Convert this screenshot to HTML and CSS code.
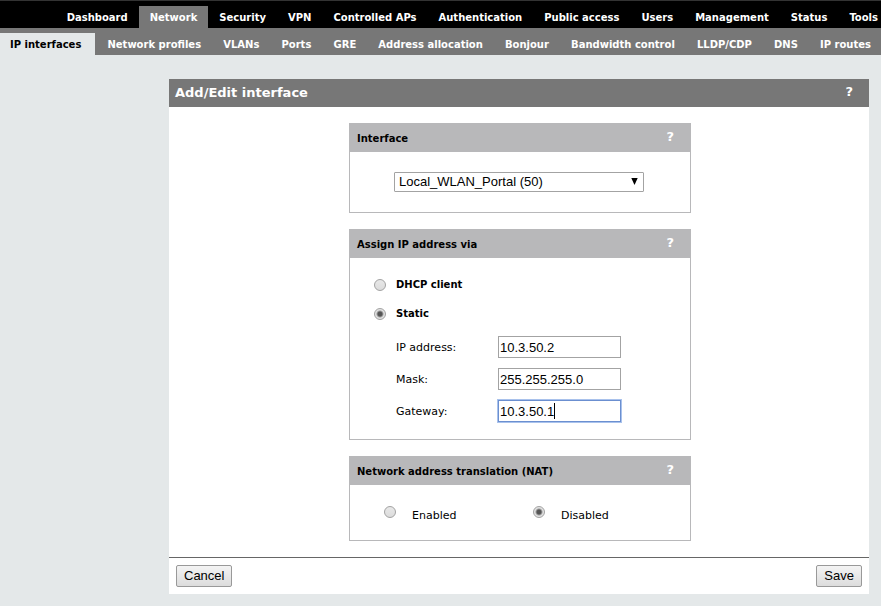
FILE: index.html
```html
<!DOCTYPE html>
<html lang="en">
<head>
<meta charset="utf-8">
<title>Add/Edit interface</title>
<link rel="stylesheet" href="styles.css">
</head>
<body>
<header>
  <nav class="nav nav-main" aria-label="Main">
    <a href="#">Dashboard</a>
    <a href="#" class="active">Network</a>
    <a href="#">Security</a>
    <a href="#">VPN</a>
    <a href="#">Controlled APs</a>
    <a href="#">Authentication</a>
    <a href="#">Public access</a>
    <a href="#">Users</a>
    <a href="#">Management</a>
    <a href="#">Status</a>
    <a href="#">Tools</a>
  </nav>
  <nav class="nav nav-sub" aria-label="Network">
    <a href="#" class="active">IP interfaces</a>
    <a href="#">Network profiles</a>
    <a href="#">VLANs</a>
    <a href="#">Ports</a>
    <a href="#">GRE</a>
    <a href="#">Address allocation</a>
    <a href="#">Bonjour</a>
    <a href="#">Bandwidth control</a>
    <a href="#">LLDP/CDP</a>
    <a href="#">DNS</a>
    <a href="#">IP routes</a>
  </nav>
</header>
<main class="page">
  <form class="panel">
    <div class="panel-head">
      <h1>Add/Edit interface</h1>
      <a href="#" class="help">?</a>
    </div>
    <div class="panel-body">
      <section class="card">
        <div class="card-head">
          <h2 id="iface-title">Interface</h2>
          <a href="#" class="help">?</a>
        </div>
        <div class="card-body iface-body">
          <div class="select-wrap">
            <select aria-labelledby="iface-title">
              <option>Local_WLAN_Portal (50)</option>
            </select>
            <svg class="arrow" viewBox="0 0 7 7" aria-hidden="true"><path d="M0.3 0h6.4L3.5 7z"/></svg>
          </div>
        </div>
      </section>
      <section class="card">
        <div class="card-head">
          <h2>Assign IP address via</h2>
          <a href="#" class="help">?</a>
        </div>
        <div class="card-body assign-body">
          <label class="choice"><input type="radio" name="assign"><span>DHCP client</span></label>
          <label class="choice"><input type="radio" name="assign" checked><span>Static</span></label>
          <div class="fields">
            <label for="ip">IP address:</label>
            <input type="text" id="ip" value="10.3.50.2">
            <label for="mask">Mask:</label>
            <input type="text" id="mask" value="255.255.255.0">
            <label for="gw">Gateway:</label>
            <div class="focus-field">
              <input type="text" id="gw" class="focused" value="10.3.50.1">
              <span class="caret"></span>
            </div>
          </div>
        </div>
      </section>
      <section class="card">
        <div class="card-head">
          <h2>Network address translation (NAT)</h2>
          <a href="#" class="help">?</a>
        </div>
        <div class="card-body nat-body">
          <label class="nat"><input type="radio" name="nat"><span>Enabled</span></label>
          <label class="nat"><input type="radio" name="nat" checked><span>Disabled</span></label>
        </div>
      </section>
    </div>
    <div class="panel-foot">
      <button type="button">Cancel</button>
      <button type="button">Save</button>
    </div>
  </form>
</main>
</body>
</html>
```
FILE: styles.css
```css
* {
  box-sizing: border-box;
}

body {
  margin: 0;
  background: #e4e8e9;
  color: #000;
  font: 11px/16px Verdana, "DejaVu Sans", sans-serif;
  overflow-x: hidden;
}

a {
  color: #fff;
  text-decoration: none;
}

h1,
h2 {
  margin: 0;
  font-weight: bold;
}

.nav {
  display: flex;
  align-items: flex-end;
  font-size: 10px;
  font-weight: bold;
  line-height: 20px;
  white-space: nowrap;
}

.nav a {
  padding: 2px 10px 0;
}

.nav-main {
  justify-content: flex-end;
  height: 28px;
  margin-right: -8px;
  border-top: 1px solid #333;
  background: #000;
}

.nav-main a {
  padding: 2px 11px 0;
}

.nav-main .active {
  background: #777;
}

.nav-sub {
  justify-content: space-between;
  height: 27px;
  background: #777;
}

.nav-sub .active {
  padding-right: 14px;
  background: #e4e8e9;
  color: #000;
}

.page {
  padding: 24px 12px 12px 169px;
}

.panel {
  background: #fff;
}

.panel-head {
  display: flex;
  justify-content: space-between;
  height: 28px;
  padding: 0 16px 0 6px;
  background: #777;
  color: #fff;
}

.panel-head h1 {
  font-size: 13px;
  line-height: 28px;
}

.help {
  font-size: 13px;
  font-weight: bold;
  line-height: 26px;
}

.panel-body {
  display: flex;
  flex-direction: column;
  align-items: center;
  gap: 16px;
  padding: 16px 0 16px 2px;
}

.card {
  width: 342px;
  border: 1px solid #b8b8ba;
}

.card-head {
  display: flex;
  justify-content: space-between;
  height: 28px;
  padding: 0 16px 0 7px;
  background: #b8b8ba;
}

.card-head h2 {
  font-size: 10px;
  line-height: 30px;
}

.iface-body {
  padding: 20px 46px 20px 44px;
}

.select-wrap {
  position: relative;
}

select {
  display: block;
  width: 100%;
  height: 20px;
  padding: 0 4px;
  appearance: none;
  border: 1px solid #a3a3a3;
  border-radius: 1px;
  background: #fff;
  color: #000;
  font: 13px/18px "Liberation Sans", Arial, sans-serif;
}

.arrow {
  position: absolute;
  top: 6px;
  right: 6px;
  width: 7px;
  height: 7px;
  pointer-events: none;
}

input[type="radio"] {
  width: 12px;
  height: 12px;
  margin: 0;
  appearance: none;
  border: 1px solid #a2a2a2;
  border-radius: 50%;
  background: linear-gradient(#e8e8e8, #dcdcdc);
}

input[type="radio"]:checked {
  background: radial-gradient(circle, #555 0 2px, #e2e2e2 4px);
}

.assign-body {
  padding: 19px 24px 17px;
}

.choice {
  display: flex;
  align-items: center;
  gap: 10px;
  margin-bottom: 13px;
  font-size: 10px;
  font-weight: bold;
}

.fields {
  display: grid;
  grid-template-columns: 102px 123px;
  gap: 10px 0;
  align-items: center;
  padding: 1px 0 0 22px;
}

.fields label {
  padding-top: 2px;
}

input[type="text"] {
  display: block;
  width: 100%;
  height: 22px;
  padding: 0 1px;
  border: 1px solid #a3a3a3;
  border-radius: 0;
  outline: none;
  background: #fff;
  color: #000;
  font: 13px/20px "Liberation Sans", Arial, sans-serif;
}

.focus-field {
  position: relative;
}

input.focused {
  border-color: #6b8fd0;
  box-shadow: 0 0 0 1px #a9c2ec;
}

.caret {
  position: absolute;
  top: 3px;
  left: 56px;
  width: 1px;
  height: 16px;
  background: #000;
}

.nat-body {
  display: grid;
  grid-template-columns: 149px 1fr;
  padding: 21px 34px 16px;
}

.nat {
  display: flex;
  align-items: flex-start;
  gap: 16px;
}

.nat span {
  padding-top: 2px;
}

.panel-foot {
  display: flex;
  justify-content: space-between;
  padding: 7px;
  border-top: 1px solid #666;
}

button {
  height: 22px;
  padding: 0 7px;
  border: 1px solid #999;
  border-radius: 2px;
  background: linear-gradient(#f4f4f4, #dcdcdc);
  color: #000;
  font: 13px/20px "Liberation Sans", Arial, sans-serif;
}
```
